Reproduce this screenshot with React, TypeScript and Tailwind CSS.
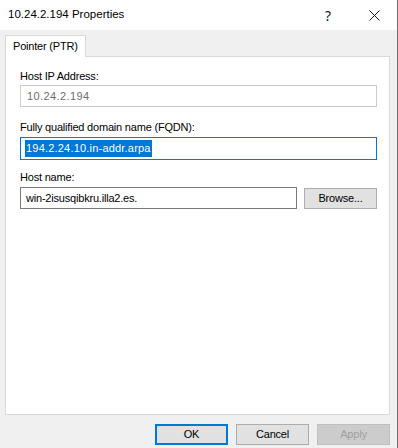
import React from 'react';

const font = { fontFamily: '"Liberation Sans", Arial, sans-serif' };

function WinButton({ label, primary, disabled }: { label: string; primary?: boolean; disabled?: boolean }) {
  return (
    <button
      type="button"
      className={`w-[73px] h-[21px] text-[11px] tracking-[-0.2px] leading-none flex items-center justify-center ${
        primary
          ? 'border-2 border-[#0078d7] bg-[#e1e1e1] text-black'
          : disabled
          ? 'border border-[#bfbfbf] bg-[#cccccc] text-[#a0a0a0]'
          : 'border border-[#adadad] bg-[#e1e1e1] text-black'
      }`}
    >
      {label}
    </button>
  );
}

export default function App() {
  return (
    <div className="w-[398px] h-[448px] flex flex-col bg-[#f0f0f0] border-r border-[#707070] overflow-hidden" style={font}>
      {/* Title bar */}
      <div className="h-[30px] bg-white flex items-center justify-between flex-shrink-0">
        <span className="pl-[8px] text-[11.5px] text-black">10.24.2.194 Properties</span>
        <div className="flex items-center h-full">
          <span className="w-[46px] text-center text-[14px] text-[#111]" style={{ fontFamily: '"Noto Sans", sans-serif' }}>?</span>
          <span className="w-[46px] flex items-center justify-center">
            <svg width="11" height="11" viewBox="0 0 11 11">
              <path d="M0.5 0.5 L10.5 10.5 M10.5 0.5 L0.5 10.5" stroke="#111" strokeWidth="1" fill="none" />
            </svg>
          </span>
        </div>
      </div>

      {/* Body */}
      <div className="flex-1 flex flex-col px-[5px] pt-[5px] pr-[7px] text-[11px] tracking-[-0.2px]">
        {/* Tab strip */}
        <div className="flex">
          <div className="relative z-10 -mb-px h-[22px] px-[7px] flex items-center bg-white border-l border-t border-r border-[#d9d9d9] text-black">
            Pointer (PTR)
          </div>
        </div>

        {/* Tab panel */}
        <div className="h-[359px] bg-white border border-[#d9d9d9] flex flex-col pl-[14px] pr-[12px] pt-[11px]">
          <div className="leading-4 text-black">Host IP Address:</div>
          <div className="mt-[1px] h-[22px] border border-[#cccccc] flex items-center px-[6px] text-[#6d6d6d] tracking-[0.4px]">
            10.24.2.194
          </div>

          <div className="mt-[12px] leading-4 text-black">Fully qualified domain name (FQDN):</div>
          <div className="mt-[2px] h-[23px] border border-[#0078d7] flex items-center px-[4px]">
            <span className="bg-[#0078d7] text-white px-[1px] leading-[17px] tracking-[0.2px]">194.2.24.10.in-addr.arpa</span>
          </div>

          <div className="mt-[9px] leading-4 text-black">Host name:</div>
          <div className="mt-[2px] flex items-center gap-[7px]">
            <div className="w-[277px] h-[22px] border border-[#7a7a7a] flex items-center px-[5px] text-black">
              win-2isusqibkru.illa2.es.
            </div>
            <WinButton label="Browse..." />
          </div>
        </div>

        {/* Buttons */}
        <div className="mt-[9px] flex justify-end gap-[8px]">
          <WinButton label="OK" primary />
          <WinButton label="Cancel" />
          <WinButton label="Apply" disabled />
        </div>
      </div>
    </div>
  );
}
